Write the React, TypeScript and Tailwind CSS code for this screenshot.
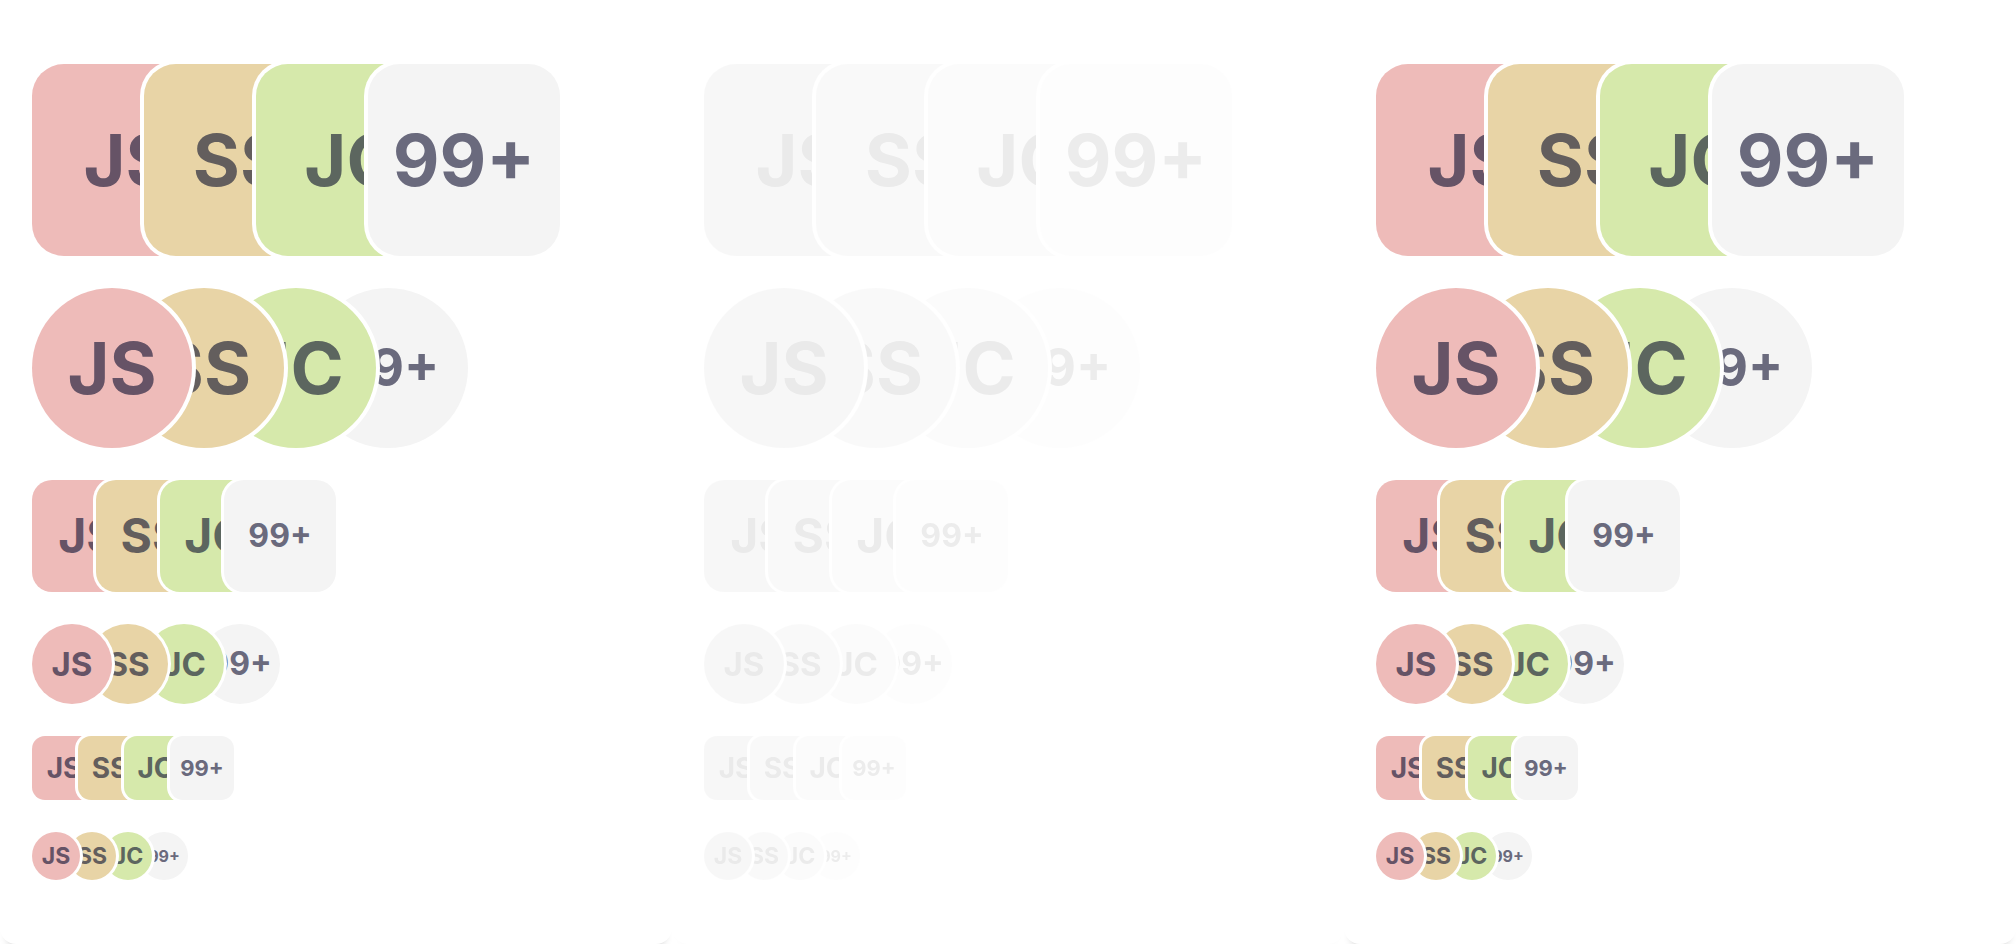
import React from "react";

type Person = { t: string; bg: string; fg: string };

const people: Person[] = [
  { t: "JS", bg: "bg-[#eebbb9]", fg: "text-[#665366]" },
  { t: "SS", bg: "bg-[#e8d4a6]", fg: "text-[#635e5d]" },
  { t: "JC", bg: "bg-[#d6e9ab]", fg: "text-[#5c665f]" },
  { t: "99+", bg: "bg-[#f4f4f4]", fg: "text-[#6a6a7d]" },
];

type RowCfg = {
  shape: string;
  overlap: string;
  init: string;
  count: string;
  ring: string;
  z: string[];
};

const rows: RowCfg[] = [
  {
    shape: "size-[192px] rounded-[32px]",
    overlap: "-ml-[80px]",
    init: "text-[72px]",
    count: "text-[72px]",
    ring: "ring-4",
    z: ["z-10", "z-20", "z-30", "z-40"],
  },
  {
    shape: "size-[160px] rounded-full",
    overlap: "-ml-[68px]",
    init: "text-[72px]",
    count: "text-[52px]",
    ring: "ring-4",
    z: ["z-40", "z-30", "z-20", "z-10"],
  },
  {
    shape: "size-[112px] rounded-[20px]",
    overlap: "-ml-[48px]",
    init: "text-[48px]",
    count: "text-[32px]",
    ring: "ring-[3px]",
    z: ["z-10", "z-20", "z-30", "z-40"],
  },
  {
    shape: "size-[80px] rounded-full",
    overlap: "-ml-[24px]",
    init: "text-[33px]",
    count: "text-[32px]",
    ring: "ring-[3px]",
    z: ["z-40", "z-30", "z-20", "z-10"],
  },
  {
    shape: "size-[64px] rounded-[13px]",
    overlap: "-ml-[18px]",
    init: "text-[28px]",
    count: "text-[22px]",
    ring: "ring-[3px]",
    z: ["z-10", "z-20", "z-30", "z-40"],
  },
  {
    shape: "size-[48px] rounded-full",
    overlap: "-ml-[12px]",
    init: "text-[23px]",
    count: "text-[16px]",
    ring: "ring-[3px]",
    z: ["z-40", "z-30", "z-20", "z-10"],
  },
];

function Row({ cfg }: { cfg: RowCfg }) {
  return (
    <div className="flex">
      {people.map((p, i) => (
        <div
          key={p.t}
          className={[
            "relative flex shrink-0 items-center justify-center overflow-hidden font-bold leading-none ring-white",
            cfg.shape,
            cfg.ring,
            cfg.z[i],
            p.bg,
            p.fg,
            i === 3 ? cfg.count : cfg.init,
            i > 0 ? cfg.overlap : "",
          ].join(" ")}
        >
          {p.t}
        </div>
      ))}
    </div>
  );
}

function Panel({ faded }: { faded?: boolean }) {
  return (
    <div
      className={
        "h-[944px] rounded-2xl bg-white px-8 pt-16 shadow-[0_10px_8px_-8px_rgba(0,0,0,0.2)] " +
        (faded ? "opacity-[0.12] grayscale" : "")
      }
    >
      <div className="flex flex-col gap-8">
        {rows.map((r, i) => (
          <Row key={i} cfg={r} />
        ))}
      </div>
    </div>
  );
}

export default function App() {
  return (
    <div className="grid h-[944px] w-[2016px] grid-cols-3 overflow-hidden bg-white font-['Inter','Noto_Sans',sans-serif]">
      <Panel />
      <Panel faded />
      <Panel />
    </div>
  );
}
